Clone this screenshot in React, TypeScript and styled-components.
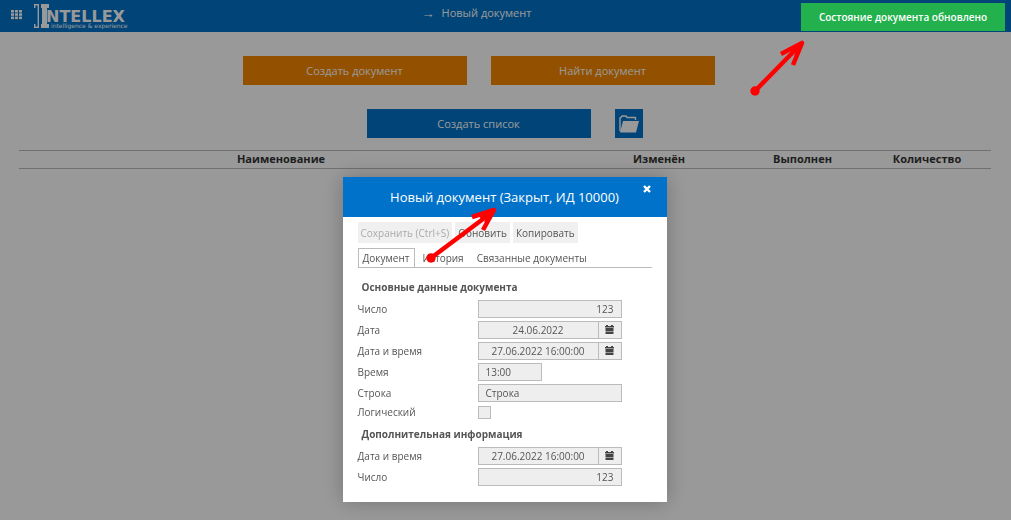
import React from "react";
import styled, { createGlobalStyle } from "styled-components";

const blue = "#0072c9";

const Global = createGlobalStyle`
  * { box-sizing: border-box; }
  body {
    margin: 0;
    background: #fff;
    color: #333;
    font-family: "Open Sans", "Noto Sans", sans-serif;
    font-size: 10px;
    line-height: 14px;
  }
  button, input { font: inherit; color: inherit; margin: 0; border-radius: 0; }
`;

const Page = styled.div`
  min-height: 100vh;
  overflow: hidden;
`;

const TopBar = styled.header`
  display: grid;
  grid-template-columns: 1fr auto 1fr;
  align-items: center;
  height: 32px;
  padding: 0 11px;
  background: ${blue};
  color: #fff;
`;

const Brand = styled.div`
  display: flex;
  align-items: center;
  gap: 12px;
`;

const IconButton = styled.button`
  display: flex;
  padding: 0;
  border: 0;
  background: none;
  color: inherit;
`;

const Crumb = styled.div`
  display: flex;
  gap: 7px;
  padding: 0 58px 4px 0;
  font-size: 11px;
  font-weight: 500;
  line-height: 16px;
`;

const CrumbArrow = styled.span`
  font-family: "Liberation Sans", sans-serif;
  font-size: 13px;
  line-height: 18px;
`;

const Actions = styled.div<{ $reserve?: boolean }>`
  display: flex;
  justify-content: center;
  gap: 24px;
  padding: 24px ${(p) => (p.$reserve ? 54 : 2)}px 0 0;
`;

const BigButton = styled.button<{ $tone: string }>`
  width: 224px;
  height: 29px;
  padding: 0;
  border: 0;
  background: ${(p) => p.$tone};
  color: #fff;
  font-size: 11px;
  font-weight: 500;
`;

const FolderButton = styled(BigButton)`
  display: flex;
  align-items: center;
  justify-content: center;
  width: 28px;
`;

const List = styled.table`
  width: calc(100% - 39px);
  margin: 12px 20px 0 19px;
  border-collapse: collapse;
  table-layout: fixed;
  border-top: 1px solid #bbb;
  border-bottom: 1px solid #bbb;
  font-size: 11px;
`;

const Th = styled.th<{ $width?: number; $inset?: number }>`
  width: ${(p) => (p.$width ? `${p.$width}px` : "auto")};
  height: 18px;
  padding: 0 ${(p) => p.$inset ?? 0}px 2px 0;
  line-height: 15px;
`;

const Overlay = styled.div`
  position: fixed;
  inset: 0;
  display: flex;
  justify-content: center;
  align-items: flex-start;
  padding: 177px 2px 0 0;
  background: rgba(0, 0, 0, 0.4);
`;

const Dialog = styled.section`
  width: 324px;
  padding-bottom: 16px;
  background: #fff;
  color: #555;
  box-shadow: 0 0 20px rgba(0, 0, 0, 0.25);
`;

const DialogHead = styled.div`
  position: relative;
  display: flex;
  align-items: center;
  justify-content: center;
  height: 40px;
  background: ${blue};
  color: #fff;
`;

const Title = styled.h2`
  margin: 0;
  font-size: 13px;
  font-weight: 400;
  line-height: 18px;
`;

const Close = styled(IconButton)`
  position: absolute;
  top: 8px;
  right: 16px;
`;

const DialogBody = styled.div`
  padding: 5px 15px 0;
`;

const Tools = styled.div`
  display: flex;
  gap: 3px;
`;

const Tool = styled.button`
  height: 21px;
  padding: 0 3px;
  border: 0;
  background: #f0f0f0;
  &:disabled { color: #aaa; }
`;

const Tabs = styled.div`
  display: flex;
  gap: 3px;
  height: 20px;
  margin: 5px 0 4px;
  border-bottom: 1px solid #bbb;
`;

const Tab = styled.button<{ $active?: boolean }>`
  height: 19px;
  padding: 0 4px;
  border: 1px solid ${(p) => (p.$active ? "#bbb" : "transparent")};
  border-bottom: 0;
  background: none;
`;

const Group = styled.fieldset`
  display: flex;
  flex-direction: column;
  gap: 3px;
  min-width: 0;
  margin: 0;
  padding: 0;
  border: 0;
`;

const Legend = styled.legend`
  padding: 8px 4px 6px;
  font-weight: 700;
`;

const Row = styled.div`
  display: grid;
  grid-template-columns: 120px 144px;
  align-items: center;
`;

const Field = styled.span`
  display: flex;
`;

const Input = styled.input<{ $align?: string; $narrow?: boolean }>`
  flex: ${(p) => (p.$narrow ? "none" : "1")};
  width: ${(p) => (p.$narrow ? "64px" : "auto")};
  min-width: 0;
  height: 18px;
  padding: 0 7px;
  border: 1px solid #bbb;
  background: #eee;
  text-align: ${(p) => p.$align ?? "left"};
`;

const Pick = styled.button`
  display: flex;
  align-items: center;
  justify-content: center;
  width: 23px;
  height: 18px;
  padding: 0 0 2px;
  border: 1px solid #bbb;
  border-left: 0;
  background: #eee;
`;

const Check = styled.input`
  appearance: none;
  width: 13px;
  height: 13px;
  border: 1px solid #bbb;
  background: #eee;
`;

const Toast = styled.div`
  position: fixed;
  top: 3px;
  right: 6px;
  width: 204px;
  padding: 7px 0;
  background: #22b14c;
  color: #fff;
  font-size: 10px;
  font-weight: 600;
  line-height: 14px;
  text-align: center;
`;

const Pointer = styled.svg<{ $x: number; $y: number }>`
  position: absolute;
  left: ${(p) => p.$x}px;
  top: ${(p) => p.$y}px;
  overflow: visible;
  pointer-events: none;
`;

const Logo = () => (
  <svg width="96" height="28" viewBox="0 0 96 28" fill="#fff" role="img" aria-label="Intellex">
    <path d="M0 2.700h4.300v3M4.300 5v18M0 25.300h4.300v-3M0.700 2v4M0.700 22v4" fill="none" stroke="#fff" strokeWidth="1.4" />
    <path d="M7 2h8v4h-2v16h2v4H7v-4h1V6H7z" />
    <text x="12" y="20" fontFamily="DejaVu Sans, sans-serif" fontWeight="700" fontSize="16">NTELLEX</text>
    <text x="17" y="26" fontFamily="DejaVu Sans, sans-serif" fontSize="6">intelligence &amp; experience</text>
  </svg>
);

const GridIcon = () => (
  <svg width="11" height="12" fill="#fff">
    {[0, 4, 8].map((x) => [0, 3.3, 6.6].map((y) => <rect key={`${x}-${y}`} x={x} y={y} width="3" height="2.5" />))}
  </svg>
);

const Calendar = () => (
  <svg width="9" height="9" viewBox="0 0 9 9" fill="#444">
    <path d="M0 1h1V0h2v1h3V0h2v1h1v1.400H0zM0.500 3h8v3.200h-8zM0.500 6.800h8V9h-8z" />
  </svg>
);

const Folder = () => (
  <svg width="20" height="18" viewBox="0 0 20 18">
    <path d="M1 16V3l1-.5L3 1h4l1 1.500h8.500V5" fill="none" stroke="#fff" strokeWidth="1.4" />
    <path d="M4 6h16l-3 11.500H1z" fill="#fff" />
  </svg>
);

const Arrow = ({ x, y, dx, dy, barbs }: { x: number; y: number; dx: number; dy: number; barbs: string }) => (
  <Pointer $x={x} $y={y} width="1" height="1" stroke="#f00" strokeWidth="4.500" fill="none" strokeLinejoin="round">
    <circle cx="0" cy="0" r="4.700" fill="#f00" stroke="none" />
    <path d={`M0 0L${dx} ${dy}`} />
    <path d={barbs} />
  </Pointer>
);

type Kind = "number" | "date" | "time" | "text" | "check";

const FormRow = ({ id, label, kind, value }: { id: string; label: string; kind: Kind; value?: string }) => (
  <Row>
    <label htmlFor={id}>{label}</label>
    <Field>
      {kind === "check" ? (
        <Check id={id} type="checkbox" />
      ) : (
        <Input
          id={id}
          readOnly
          value={value}
          $narrow={kind === "time"}
          $align={kind === "number" ? "right" : kind === "date" ? "center" : "left"}
        />
      )}
      {kind === "date" && (
        <Pick type="button" aria-label="Календарь">
          <Calendar />
        </Pick>
      )}
    </Field>
  </Row>
);

export default function App() {
  return (
    <Page>
      <Global />
      <TopBar>
        <Brand>
          <IconButton aria-label="Меню"><GridIcon /></IconButton>
          <Logo />
        </Brand>
        <Crumb>
          <CrumbArrow>→</CrumbArrow>
          <span>Новый документ</span>
        </Crumb>
      </TopBar>
      <main>
        <Actions $reserve>
          <BigButton $tone="#f68700">Создать документ</BigButton>
          <BigButton $tone="#f68700">Найти документ</BigButton>
        </Actions>
        <Actions>
          <BigButton $tone={blue}>Создать список</BigButton>
          <FolderButton $tone={blue} aria-label="Открыть"><Folder /></FolderButton>
        </Actions>
        <List>
          <thead>
            <tr>
              <Th $inset={33}>Наименование</Th>
              <Th $width={166}>Изменён</Th>
              <Th $width={121}>Выполнен</Th>
              <Th $width={128}>Количество</Th>
            </tr>
          </thead>
        </List>
      </main>
      <Overlay>
        <Dialog role="dialog" aria-labelledby="dialog-title">
          <DialogHead>
            <Title id="dialog-title">Новый документ (Закрыт, ИД 10000)</Title>
            <Close aria-label="Закрыть">
              <svg width="8" height="8" viewBox="0 0 8 8" stroke="#fff" strokeWidth="2.400">
                <path d="M1 1l6 6M7 1l-6 6" />
              </svg>
            </Close>
            <Arrow x={88} y={81} dx={60} dy={-45} barbs="M41 -41L63 -48L52 -28M50 -39L63 -48L55 -35" />
          </DialogHead>
          <DialogBody>
            <Tools>
              <Tool disabled>Сохранить (Ctrl+S)</Tool>
              <Tool>Обновить</Tool>
              <Tool>Копировать</Tool>
            </Tools>
            <Tabs role="tablist">
              <Tab role="tab" $active>Документ</Tab>
              <Tab role="tab">История</Tab>
              <Tab role="tab">Связанные документы</Tab>
            </Tabs>
            <Group>
              <Legend>Основные данные документа</Legend>
              <FormRow id="number" label="Число" kind="number" value="123" />
              <FormRow id="date" label="Дата" kind="date" value="24.06.2022" />
              <FormRow id="datetime" label="Дата и время" kind="date" value="27.06.2022 16:00:00" />
              <FormRow id="time" label="Время" kind="time" value="13:00" />
              <FormRow id="string" label="Строка" kind="text" value="Строка" />
              <FormRow id="flag" label="Логический" kind="check" />
            </Group>
            <Group>
              <Legend>Дополнительная информация</Legend>
              <FormRow id="extra-datetime" label="Дата и время" kind="date" value="27.06.2022 16:00:00" />
              <FormRow id="extra-number" label="Число" kind="number" value="123" />
            </Group>
          </DialogBody>
        </Dialog>
      </Overlay>
      <Toast role="status">
        Состояние документа обновлено
        <Arrow x={-46} y={88} dx={45} dy={-46} barbs="M26 -37L47 -48L38 -26M36 -40L47 -48L41 -34" />
      </Toast>
    </Page>
  );
}
